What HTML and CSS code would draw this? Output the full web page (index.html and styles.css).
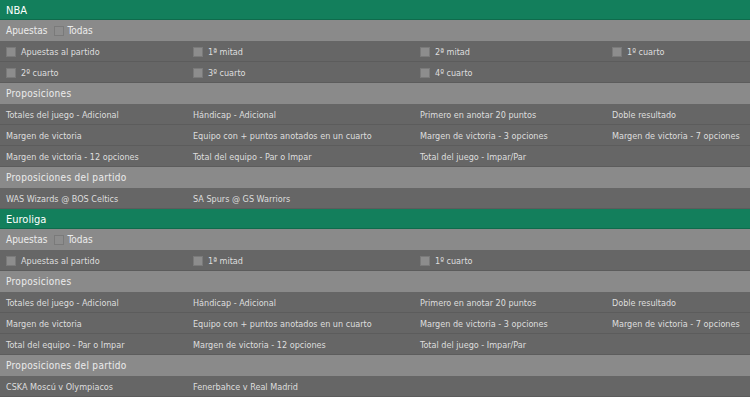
FILE: index.html
```html
<!DOCTYPE html>
<html lang="es">
<head>
  <meta charset="UTF-8">
  <link rel="stylesheet" href="styles.css">
</head>
<body>
  <!-- NBA -->
  <section class="league">
    <h2 class="league-title">NBA</h2>
    <div class="bar">Apuestas <span class="check"></span> Todas</div>
    <div class="grid">
      <div class="cell"><span class="check"></span>Apuestas al partido</div>
      <div class="cell"><span class="check"></span>1ª mitad</div>
      <div class="cell"><span class="check"></span>2ª mitad</div>
      <div class="cell"><span class="check"></span>1º cuarto</div>
      <div class="cell"><span class="check"></span>2º cuarto</div>
      <div class="cell"><span class="check"></span>3º cuarto</div>
      <div class="cell"><span class="check"></span>4º cuarto</div>
      <div class="cell"></div>
    </div>
    <div class="bar spaced">Proposiciones</div>
    <div class="grid">
      <div class="cell">Totales del juego - Adicional</div>
      <div class="cell">Hándicap - Adicional</div>
      <div class="cell">Primero en anotar 20 puntos</div>
      <div class="cell">Doble resultado</div>
      <div class="cell">Margen de victoria</div>
      <div class="cell">Equipo con + puntos anotados en un cuarto</div>
      <div class="cell">Margen de victoria - 3 opciones</div>
      <div class="cell">Margen de victoria - 7 opciones</div>
      <div class="cell">Margen de victoria - 12 opciones</div>
      <div class="cell">Total del equipo - Par o Impar</div>
      <div class="cell">Total del juego - Impar/Par</div>
      <div class="cell"></div>
    </div>
    <div class="bar spaced">Proposiciones del partido</div>
    <div class="grid">
      <div class="cell">WAS Wizards @ BOS Celtics</div>
      <div class="cell">SA Spurs @ GS Warriors</div>
      <div class="cell"></div>
      <div class="cell"></div>
    </div>
  </section>

  <!-- Euroliga -->
  <section class="league">
    <h2 class="league-title">Euroliga</h2>
    <div class="bar">Apuestas <span class="check"></span> Todas</div>
    <div class="grid">
      <div class="cell"><span class="check"></span>Apuestas al partido</div>
      <div class="cell"><span class="check"></span>1ª mitad</div>
      <div class="cell"><span class="check"></span>1º cuarto</div>
      <div class="cell"></div>
    </div>
    <div class="bar spaced">Proposiciones</div>
    <div class="grid">
      <div class="cell">Totales del juego - Adicional</div>
      <div class="cell">Hándicap - Adicional</div>
      <div class="cell">Primero en anotar 20 puntos</div>
      <div class="cell">Doble resultado</div>
      <div class="cell">Margen de victoria</div>
      <div class="cell">Equipo con + puntos anotados en un cuarto</div>
      <div class="cell">Margen de victoria - 3 opciones</div>
      <div class="cell">Margen de victoria - 7 opciones</div>
      <div class="cell">Total del equipo - Par o Impar</div>
      <div class="cell">Margen de victoria - 12 opciones</div>
      <div class="cell">Total del juego - Impar/Par</div>
      <div class="cell"></div>
    </div>
    <div class="bar spaced">Proposiciones del partido</div>
    <div class="grid">
      <div class="cell">CSKA Moscú v Olympiacos</div>
      <div class="cell">Fenerbahce v Real Madrid</div>
      <div class="cell"></div>
      <div class="cell"></div>
    </div>
  </section>
</body>
</html>
```

FILE: styles.css
```css
/* Basic layout */
body {
  margin: 0;
  background: #666;
  font-family: "DejaVu Sans Condensed", "DejaVu Sans", Verdana, sans-serif;
  font-stretch: condensed;
  font-size: 9px;
  color: #dedede;
  overflow: hidden;
}
.league-title {
  margin: 0;
  height: 16px;
  line-height: 16px;
  padding: 3px 6px 0;
  background: #137f5c;
  border-bottom: 1px solid #0f6b4c;
  font-size: 11px;
  font-weight: normal;
  color: #fff;
}
/* Light grey section bars */
.bar {
  display: flex;
  align-items: center;
  gap: 4px;
  height: 21px;
  padding: 0 6px;
  background: #8a8a8a;
  color: #ececec;
  font-size: 10px;
}
.bar.spaced {
  letter-spacing: 0.3px;
}
/* Option grid */
.grid {
  display: grid;
  grid-template-columns: 187px 227px 192px 1fr;
}
.cell {
  display: flex;
  align-items: center;
  height: 18px;
  padding: 2px 6px 0;
  background: #666;
  border-bottom: 1px solid #5c5c5c;
  white-space: nowrap;
}
.check {
  display: inline-block;
  width: 8px;
  height: 8px;
  background: #8d8d8d;
  border: 1px solid #7a7a7a;
  margin-right: 5px;
}
.bar .check {
  margin: 0 0 0 2px;
}
```
